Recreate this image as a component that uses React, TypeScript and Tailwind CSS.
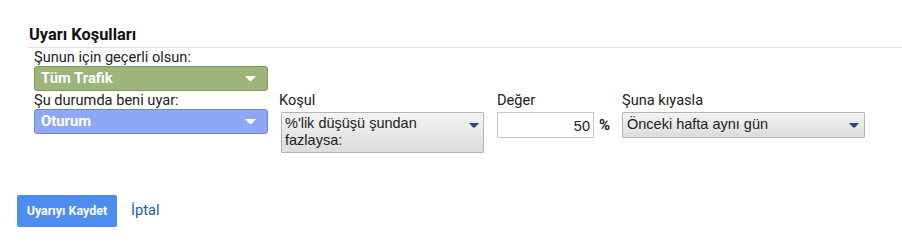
import React from "react";

const WhiteCaret = () => (
  <svg width="11" height="5" viewBox="0 0 11 5"><path d="M0 0h11L6.5 5h-2z" fill="#ffffff" /></svg>
);
const DarkCaret = () => (
  <svg width="10" height="5" viewBox="0 0 10 5"><path d="M0 0h10L6 4.5H4z" fill="#2d4a80" /></svg>
);

const arial = { fontFamily: "'Liberation Sans', Arial, sans-serif" };

export default function App() {
  return (
    <div className="w-[902px] h-[244px] bg-white relative text-[#222]" style={{ fontFamily: "Roboto, 'Liberation Sans', Arial, sans-serif" }}>
      <div className="pt-[26px] pl-[28px]">
        <div className="text-[16.4px] font-bold leading-[18px] text-[#111] pl-[1px]">Uyarı Koşulları</div>
        <div className="mt-[3px] h-px bg-[#e0e0e0]" />
      </div>
      <div className="pl-[34px]">
        <div className="text-[14.6px] leading-[16px] mt-[1px] text-[#222]">Şunun için geçerli olsun:</div>
        <div className="mt-[1px] w-[234px] h-[25px] rounded-[3px] bg-[#9db57a] border border-[#7f9a5c] flex items-center justify-between pl-[6px] pr-[11px]">
          <span className="text-white font-bold text-[14.8px]">Tüm Trafik</span>
          <WhiteCaret />
        </div>
        <div className="flex mt-[1px]">
          <div className="w-[247px]">
            <div className="text-[14.6px] leading-[16px] text-[#222]">Şu durumda beni uyar:</div>
            <div className="mt-[1px] w-[234px] h-[25px] rounded-[3px] bg-[#8fa8f6] border border-[#6f88d6] flex items-center justify-between pl-[6px] pr-[11px]">
              <span className="text-white font-bold text-[14.8px]">Oturum</span>
              <WhiteCaret />
            </div>
          </div>
          <div className="w-[216px]">
            <div className="text-[14.6px] leading-[16px] text-[#222] -ml-[2px]">Koşul</div>
            <div className="mt-[4px] w-[203px] h-[41px] border border-[#b5b5b5] rounded-[1px] bg-gradient-to-b from-[#f4f4f4] to-[#dcdcdc] flex items-start justify-between pl-[3px] pr-[4px] pt-[2px]">
              <span className="text-[14.5px] leading-[17px] text-[#222]" style={arial}>%'lik düşüşü şundan<br />fazlaysa:</span>
              <span className="mt-[8px]"><DarkCaret /></span>
            </div>
          </div>
          <div className="w-[125px]">
            <div className="text-[14.6px] leading-[16px] text-[#222]">Değer</div>
            <div className="flex items-center mt-[4px]">
              <div className="w-[97px] h-[26px] border border-[#c8c8c8] bg-white text-right pr-[3px] text-[14.5px] leading-[26px] text-[#222]" style={arial}>50</div>
              <span className="ml-[5px] font-bold text-[15px] text-[#222]">%</span>
            </div>
          </div>
          <div>
            <div className="text-[14.6px] leading-[16px] text-[#222]">Şuna kıyasla</div>
            <div className="mt-[4px] w-[243px] h-[26px] border border-[#b5b5b5] rounded-[1px] bg-gradient-to-b from-[#f4f4f4] to-[#dcdcdc] flex items-center justify-between pl-[4px] pr-[5px]">
              <span className="text-[14.5px] text-[#222]" style={arial}>Önceki hafta aynı gün</span>
              <DarkCaret />
            </div>
          </div>
        </div>
      </div>
      <div className="flex items-center pl-[17px] mt-[42px]">
        <div className="w-[100px] h-[32px] rounded-[2px] bg-[#4d8cf0] flex items-center justify-center text-white font-bold text-[12.5px]">Uyarıyı Kaydet</div>
        <span className="ml-[14px] text-[14.6px] text-[#1a5ba6]">İptal</span>
      </div>
    </div>
  );
}
